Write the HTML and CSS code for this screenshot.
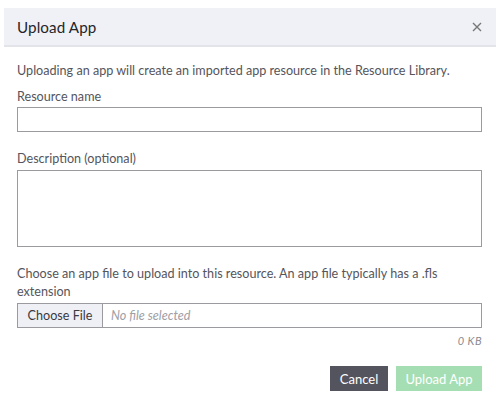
FILE: index.html
```html
<!DOCTYPE html>
<html>
<head>
<meta charset="utf-8">
<link rel="stylesheet" href="styles.css">
</head>
<body>
<div class="dialog">
  <div class="header">
    <h1 class="title">Upload App</h1>
    <span class="close" aria-label="Close">
      <svg width="10" height="10" viewBox="0 0 10 10"><path d="M1 1L9 9M9 1L1 9" stroke="#777" stroke-width="1.4" fill="none"/></svg>
    </span>
  </div>
  <div class="body">
    <p class="intro">Uploading an app will create an imported app resource in the Resource Library.</p>
    <label class="label">Resource name</label>
    <div class="input"></div>
    <label class="label label-desc">Description (optional)</label>
    <div class="textarea"></div>
    <p class="hint">Choose an app file to upload into this resource. An app file typically has a .fls extension</p>
    <div class="file">
      <span class="file-btn">Choose File</span>
      <span class="file-name">No file selected</span>
    </div>
    <div class="size">0 KB</div>
    <div class="actions">
      <span class="btn btn-cancel">Cancel</span>
      <span class="btn btn-upload">Upload App</span>
    </div>
  </div>
</div>
</body>
</html>
```
FILE: styles.css
```css
html, body {
  margin: 0;
  padding: 0;
  background: #fff;
}
body {
  font-family: "Lato", "Open Sans", sans-serif;
  color: #4a4a52;
}
.dialog {
  padding: 8px 4px 0 4px;
}
.header {
  height: 37px;
  background: #f0f1f6;
  border-bottom: 2px solid #e3e4ea;
  display: flex;
  align-items: center;
  justify-content: space-between;
  padding: 0 14px 0 13px;
}
.title {
  margin: 0;
  font-size: 15.2px;
  font-weight: 400;
  color: #25252b;
  letter-spacing: 0.1px;
}
.close {
  display: flex;
  width: 10px;
  height: 10px;
}
.body {
  padding: 15px 14px 0 13px;
}
.intro {
  margin: 0;
  font-size: 12.6px;
  line-height: 17px;
  color: #55555c;
}
.label {
  display: block;
  margin-top: 9px;
  font-size: 12.6px;
  line-height: 17px;
  color: #55555c;
}
.input {
  margin-top: 2px;
  height: 23px;
  border: 1px solid #9a9a9f;
}
.label-desc {
  margin-top: 18px;
}
.textarea {
  margin-top: 3px;
  height: 75px;
  border: 1px solid #9a9a9f;
}
.hint {
  margin: 18px 0 0 0;
  font-size: 12.6px;
  line-height: 18px;
  color: #55555c;
}
.file {
  margin-top: 2px;
  display: flex;
  height: 23px;
  border: 1px solid #9a9a9f;
}
.file-btn {
  width: 84px;
  background: #eff0f6;
  border-right: 1px solid #9a9a9f;
  display: flex;
  align-items: center;
  justify-content: center;
  font-size: 12.6px;
  color: #3a3a42;
}
.file-name {
  display: flex;
  align-items: center;
  padding-left: 8px;
  font-size: 12.6px;
  font-style: italic;
  color: #a0a0a6;
}
.size {
  text-align: right;
  font-size: 11px;
  font-style: italic;
  color: #8a8a90;
  margin-top: 6px;
  letter-spacing: 0.5px;
}
.actions {
  display: flex;
  justify-content: flex-end;
  gap: 8px;
  margin-top: 19px;
}
.btn {
  height: 25px;
  display: flex;
  align-items: center;
  justify-content: center;
  font-size: 13px;
  color: #fff;
}
.btn-cancel {
  width: 58px;
  background: #54545f;
}
.btn-upload {
  width: 86px;
  background: #a5deb2;
}
```
